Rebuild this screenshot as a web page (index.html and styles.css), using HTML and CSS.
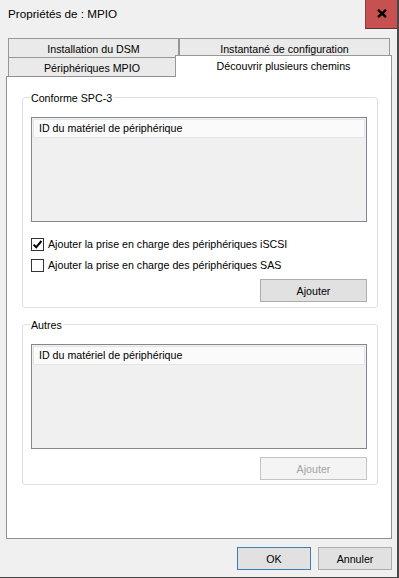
FILE: index.html
```html
<!DOCTYPE html>
<html lang="fr">
<head>
<meta charset="utf-8">
<title>Propriétés de : MPIO</title>
<link rel="stylesheet" href="styles.css">
</head>
<body>
<div class="window">
  <div class="titlebar">
    <span class="title">Propriétés de : MPIO</span>
    <div class="close">
      <svg width="10" height="9" viewBox="0 0 10 9"><path d="M1 0.8 L9 8.2 M9 0.8 L1 8.2" stroke="#000" stroke-width="2.4" fill="none"/></svg>
    </div>
  </div>
  <div class="content">
    <div class="tabs">
      <div class="tabrow row1">
        <div class="tab t1">Installation du DSM</div>
        <div class="tab t2">Instantané de configuration</div>
      </div>
      <div class="tabrow row2">
        <div class="tab t3">Périphériques MPIO</div>
        <div class="tab sel">Découvrir plusieurs chemins</div>
      </div>
    </div>
    <div class="panel">
      <div class="group g1">
        <div class="group-title">Conforme SPC-3</div>
        <div class="listbox">
          <div class="list-header">ID du matériel de périphérique</div>
        </div>
        <label class="check first">
          <span class="box"><svg width="11" height="11" viewBox="0 0 11 11"><path d="M1.6 5.6 L4.2 8.3 L9.4 2" stroke="#000" stroke-width="2" fill="none"/></svg></span>
          <span>Ajouter la prise en charge des périphériques iSCSI</span>
        </label>
        <label class="check second">
          <span class="box"></span>
          <span>Ajouter la prise en charge des périphériques SAS</span>
        </label>
        <div class="btnrow b1"><button class="btn wide">Ajouter</button></div>
      </div>
      <div class="group g2">
        <div class="group-title">Autres</div>
        <div class="listbox">
          <div class="list-header">ID du matériel de périphérique</div>
        </div>
        <div class="btnrow b2"><button class="btn wide disabled">Ajouter</button></div>
      </div>
    </div>
    <div class="footer">
      <button class="btn default">OK</button>
      <button class="btn">Annuler</button>
    </div>
  </div>
</div>
</body>
</html>
```
FILE: styles.css
```css
* { box-sizing: border-box; }
html, body { margin: 0; padding: 0; }
body {
  background: #f0f0f0;
  font-family: "Liberation Sans", Arial, sans-serif;
  font-size: 10.67px;
  color: #000;
}
.window {
  width: 399px;
  height: 578px;
  background: #f0f0f0;
  border-right: 2px solid #484848;
  border-bottom: 1px solid #484848;
}
.titlebar {
  height: 29px;
  display: flex;
  align-items: flex-start;
  justify-content: space-between;
}
.title {
  font-size: 11.7px;
  line-height: 28px;
  padding-left: 8px;
  color: #000;
}
.close {
  width: 32px;
  height: 29px;
  background: #c75050;
  border-left: 1px solid #8a4040;
  border-bottom: 1px solid #5a3030;
  display: flex;
  align-items: center;
  justify-content: center;
  padding-bottom: 2px;
}
.content {
  padding-left: 6px;
}
.tabs {
  margin-top: 9px;
  margin-left: 2px;
  width: 384px;
}
.tabrow {
  display: flex;
  height: 19px;
}
.tab {
  display: flex;
  align-items: center;
  justify-content: center;
  background: #eaeaea;
  border-top: 1px solid #979797;
  height: 19px;
  white-space: nowrap;
}
.t1 { width: 171px; border-left: 1px solid #979797; border-right: 1px solid #979797; padding-top: 1px; }
.t2 { width: 211px; border-left: 1px solid #979797; border-right: 1px solid #979797; padding-top: 1px; }
.t3 { width: 167px; border-left: 1px solid #979797; padding-top: 1px; }
.sel {
  width: 217px;
  height: 22px;
  margin-top: -2px;
  background: #fff;
  border: 1px solid #979797;
  border-bottom: none;
  position: relative;
  z-index: 1;
  padding-bottom: 1px;
}
.panel {
  width: 386px;
  height: 463px;
  background: #fff;
  border: 1px solid #8e9096;
  padding-top: 20px;
}
.group {
  margin: 0 13px 0 15px;
  border: 1px solid #dcdfe3;
  border-radius: 3px;
  padding: 0 10px 5px 8px;
}
.g2 { margin-top: 16px; padding-bottom: 4px; }
.group-title {
  width: fit-content;
  height: 14px;
  line-height: 14px;
  margin: -7px 0 0 -1px;
  padding: 0 1px;
  background: #fff;
}
.listbox {
  margin-top: 12px;
  height: 105px;
  background: #f0f0f0;
  border: 1px solid #82868e;
  padding: 1px;
}
.list-header {
  height: 19px;
  line-height: 17px;
  background: #fafafa;
  border: 1px solid #e3e5e8;
  padding-left: 5px;
}
.check {
  display: flex;
  align-items: center;
  height: 13px;
  gap: 4px;
  line-height: 13px;
}
.check.first { margin-top: 16px; }
.check.second { margin-top: 8px; }
.box {
  width: 13px;
  height: 13px;
  border: 1px solid #333;
  background: #fff;
  display: flex;
  align-items: center;
  justify-content: center;
  flex: none;
}
.btnrow {
  display: flex;
  justify-content: flex-end;
}
.b1 { margin-top: 7px; }
.b2 { margin-top: 8px; }
.btn {
  font-family: "Liberation Sans", Arial, sans-serif;
  font-size: 10.67px;
  color: #000;
  width: 74px;
  height: 23px;
  background: #e1e1e1;
  border: 1px solid #adadad;
  padding: 0;
  margin: 0;
}
.btn.wide { width: 107px; }
.btn.disabled {
  background: #f4f4f4;
  border-color: #c4c4c4;
  color: #a3a3a3;
}
.btn.default { border-color: #3c7fb1; }
.footer {
  width: 386px;
  margin-top: 8px;
  display: flex;
  justify-content: flex-end;
  gap: 7px;
}
```
